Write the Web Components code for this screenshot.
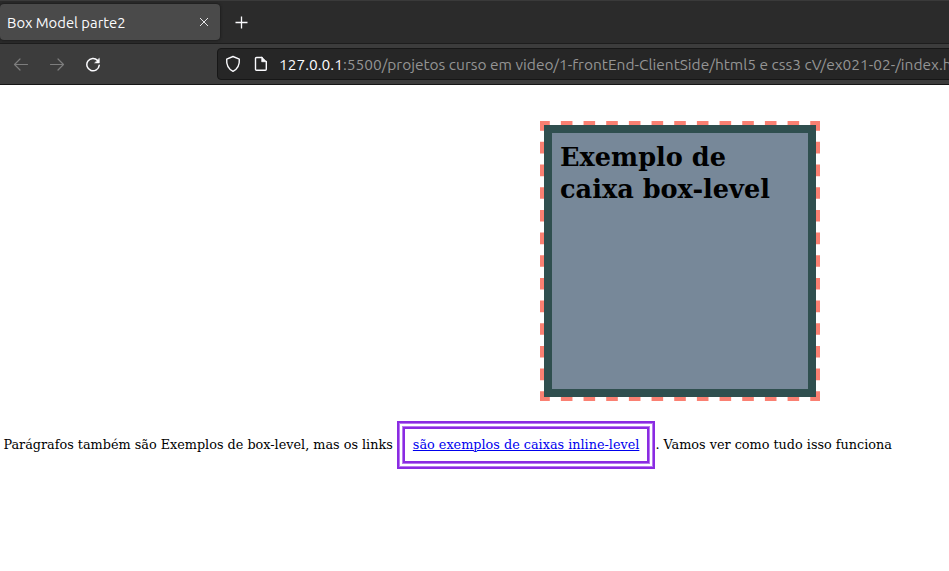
<!DOCTYPE html>
<html lang="pt-br">
<head>
<meta charset="utf-8">
<title>Box Model parte2</title>
<style>
html,body{margin:0;height:100%;overflow:hidden;background:#fff}
</style>
</head>
<body>
<browser-window>
  <tab-strip slot="chrome">Box Model parte2</tab-strip>
  <nav-bar slot="chrome"><span slot="host">127.0.0.1</span><span slot="path">:5500/projetos curso em video/1-frontEnd-ClientSide/html5 e css3 cV/ex021-02-/index.h</span></nav-bar>
  <level-box>Exemplo de caixa box-level</level-box>
  <text-line>Parágrafos também são Exemplos de box-level, mas os links <inline-link>são exemplos de caixas inline-level</inline-link>. Vamos ver como tudo isso funciona</text-line>
</browser-window>
<script>
const define = (name, html) => customElements.define(name, class extends HTMLElement {
  constructor(){ super(); this.attachShadow({mode:'open'}).innerHTML = html; }
});

define('browser-window', `<style>
:host{display:flex;flex-direction:column;height:571px;width:949px;overflow:hidden;background:#fff}
main{display:flex;flex-direction:column;padding-top:36px}
</style><slot name="chrome"></slot><main><slot></slot></main>`);

define('tab-strip', `<style>
:host{display:flex;height:43px;box-sizing:border-box;background:#2b2b2b;border-top:1px solid #3a3a3a;padding-top:3px;font:15px/36px Ubuntu,"Noto Sans",sans-serif;color:#fbfbfe}
.tab{display:flex;align-items:center;width:220px;height:36px;box-sizing:border-box;background:#4a4a4a;border-radius:4px;padding:0 11px 0 7px;justify-content:space-between;box-shadow:0 0 3px #111}
.t{white-space:nowrap;font-size:14.8px;padding-top:1px}
svg{display:block;stroke:#e6e6e8;fill:none}
.plus{margin:12px 0 0 15px;stroke:#fbfbfe}
</style><div class="tab"><span class="t"><slot></slot></span><svg width="10" height="10" viewBox="0 0 10 10"><path d="M1 1l8 8M9 1l-8 8" stroke-width="1"/></svg></div>
<svg class="plus" width="13" height="13" viewBox="0 0 13 13"><path d="M6.5 .5v12M.5 6.5h12" stroke-width="1.3"/></svg>`);

define('nav-bar', `<style>
:host{display:flex;height:42px;box-sizing:border-box;background:#3c3c3c;border-top:1px solid #1d1d1d;border-bottom:1px solid #151515;padding:4px 0 4px 13px}
svg{display:block;fill:none;stroke:#fbfbfe;stroke-width:1.4;stroke-linecap:round;stroke-linejoin:round;flex:none}
.btns{display:flex;align-items:center;gap:20px;width:204px;flex:none}
svg.dim{stroke:#7d7d7d;stroke-width:1.2}
.url{display:flex;align-items:center;width:760px;flex:none;height:32px;box-sizing:border-box;background:#262626;border:1px solid #171717;border-radius:4px;padding-left:7px;white-space:nowrap}
.page{margin:0 11px 0 13px}
.text{display:flex;margin-top:2px;font:15.5px/30px Ubuntu,"Noto Sans",sans-serif}
.h{color:#fbfbfe}.p{color:#949494;letter-spacing:-.012px}
</style>
<div class="btns">
<svg class="dim" width="16" height="16" viewBox="0 0 16 16"><path d="M14.5 8.5H1.5M7 3L1.5 8.5L7 14"/></svg>
<svg class="dim" width="16" height="16" viewBox="0 0 16 16"><path d="M1.5 8.5h13M9 3L14.5 8.5L9 14"/></svg>
<svg width="16" height="16" viewBox="0 0 16 16"><path d="M12.6 4.4A6.2 6.2 0 1 0 14.2 9.3" stroke-width="1.5"/><path d="M14.3 2.6v4.3h-4.3z" fill="#fbfbfe" stroke-width=".6"/></svg>
</div>
<div class="url">
<svg width="16" height="18" viewBox="0 0 16 18"><path d="M8 1.5L14.3 4.1C14.7 9.3 13.2 13.7 8 16.3C2.8 13.7 1.3 9.3 1.7 4.1Z"/></svg>
<svg class="page" width="14" height="16" viewBox="0 0 14 16"><path d="M8 1.5H2.5Q1.5 1.5 1.5 2.5V13.3Q1.5 14.3 2.5 14.3H11.3Q12.3 14.3 12.3 13.3V5.5"/><path d="M8 1.3L12.5 5.7H8Z" fill="#fbfbfe" stroke-width=".8"/></svg>
<div class="text"><span class="h"><slot name="host"></slot></span><span class="p"><slot name="path"></slot></span></div>
</div>`);

define('level-box', `<style>
:host{display:grid;width:280px;height:280px;margin-left:540px}
svg,.box{grid-area:1/1}
svg{fill:none;stroke:salmon;stroke-width:4}
.box{margin:4px;border:8px solid darkslategray;background:lightslategray;padding:8px}
h1{margin:0;font:bold 25.6px/32px "DejaVu Serif",serif;color:#000}
</style>
<svg width="280" height="280"><path d="M0 2H280M0 278H280M2 0V280M278 0V280" stroke-dasharray="11.6 11.07" stroke-dashoffset="1.8"/></svg>
<div class="box"><h1><slot></slot></h1></div>`);

define('text-line', `<style>
:host{display:block;padding:20px 0 0 3.4px;font:12.8px/48px "DejaVu Serif",serif;color:#000;white-space:nowrap}
</style><slot></slot>`);

define('inline-link', `<style>
:host{display:inline;border:2px solid blueviolet;padding:14px 14px 15px;box-shadow:inset 0 0 0 1px #b67aef,inset 0 0 0 3px #fff,inset 0 0 0 4px #b67aef,inset 0 0 0 6px blueviolet}
a{color:#0000ee;text-decoration:underline}
</style><a href="#"><slot></slot></a>`);
</script>
</body>
</html>
